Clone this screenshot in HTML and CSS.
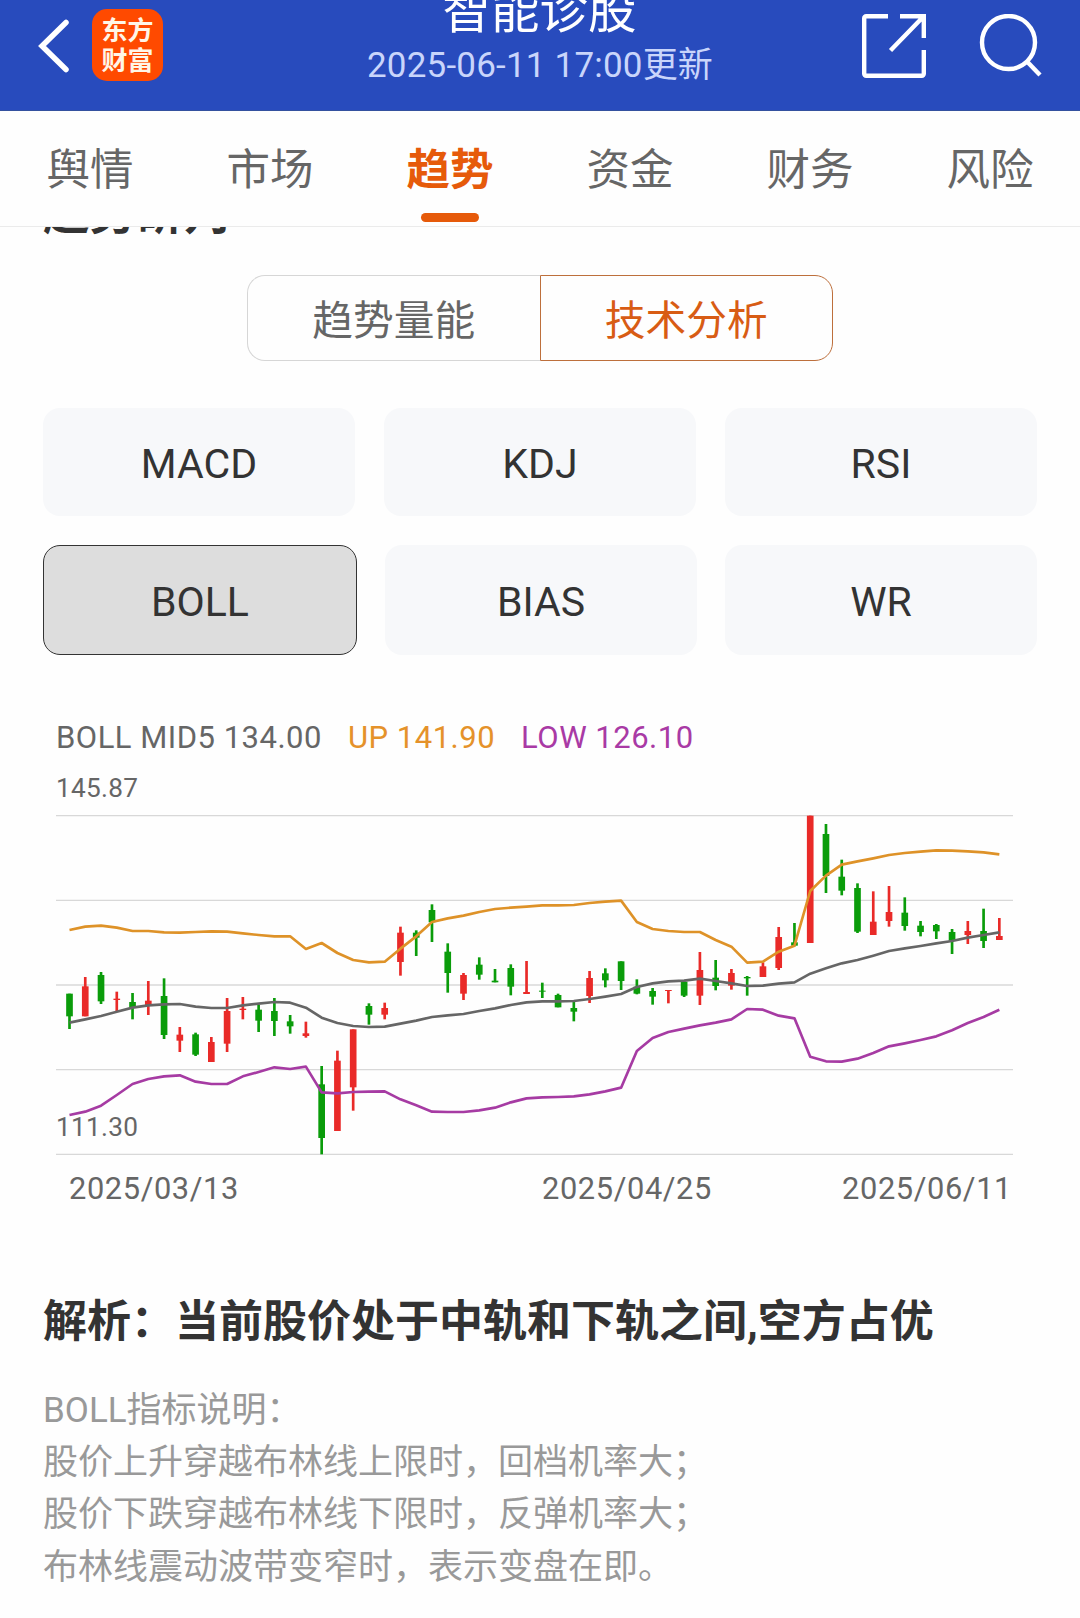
FILE: index.html
```html
<!doctype html>
<html lang="zh-CN">
  <head>
    <meta charset="utf-8" />
    <meta name="viewport" content="width=device-width" />
    <title>智能诊股</title>
    <link rel="stylesheet" href="styles.css">
  </head>

  <body>
    <header class="header">
      <div class="header-left">
        <svg class="back" width="32" height="56" viewBox="0 0 32 56">
          <path d="M28 4.5 4 28l24 23.5" />
        </svg>
        <div class="logo">东方<br />财富</div>
      </div>
      <div class="header-title">
        <h1>智能诊股</h1>
        <p>2025-06-11 17:00更新</p>
      </div>
      <div class="header-right">
        <svg class="icon" width="64" height="64" viewBox="0 0 64 64">
          <path d="M26 2.2H4.2a2 2 0 0 0-2 2v55.6a2 2 0 0 0 2 2h55.6a2 2 0 0 0 2-2V36M38 2.2h23.8V24M28.5 36.5 61 3" />
        </svg>
        <svg class="icon" width="64" height="64" viewBox="0 0 64 64">
          <circle cx="29.5" cy="28.5" r="26.5" />
          <path d="M48 47.5 61 61" />
        </svg>
      </div>
    </header>

    <nav class="tabs">
      <a class="tab">舆情</a>
      <a class="tab">市场</a>
      <a class="tab active">趋势</a>
      <a class="tab">资金</a>
      <a class="tab">财务</a>
      <a class="tab">风险</a>
    </nav>

    <main>
      <div class="section-title"><h2>趋势研判</h2></div>

      <div class="segment">
        <button class="segment-item">趋势量能</button>
        <button class="segment-item active">技术分析</button>
      </div>

      <div class="indicators">
        <div class="indicator-row">
          <button class="indicator">MACD</button>
          <button class="indicator">KDJ</button>
          <button class="indicator">RSI</button>
        </div>
        <div class="indicator-row">
          <button class="indicator active">BOLL</button>
          <button class="indicator">BIAS</button>
          <button class="indicator">WR</button>
        </div>
      </div>

      <section class="chart">
        <div class="legend">
          <span class="mid">BOLL MID5 134.00</span>
          <span class="up">UP 141.90</span>
          <span class="low">LOW 126.10</span>
        </div>
        <div class="max">145.87</div>
        <div class="plot">
          <svg id="boll" width="957" height="340" viewBox="0 0 2871 1020"></svg>
          <span class="min">111.30</span>
        </div>
        <div class="dates">
          <span>2025/03/13</span>
          <span>2025/04/25</span>
          <span>2025/06/11</span>
        </div>
      </section>

      <h3 class="analysis">解析：当前股价处于中轨和下轨之间,空方占优</h3>
      <p class="notes">
        BOLL指标说明：<br />
        股价上升穿越布林线上限时，回档机率大；<br />
        股价下跌穿越布林线下限时，反弹机率大；<br />
        布林线震动波带变窄时，表示变盘在即。
      </p>
    </main>

    <script src="chart.js"></script>
  </body>
</html>
```
FILE: styles.css
```css
* {
  box-sizing: border-box;
}
body {
  margin: 0;
  background: #fefefe;
  color: #333;
  font-family: Roboto, "Noto Sans CJK SC", sans-serif;
}
h1,
h2,
h3,
p {
  margin: 0;
}
button {
  padding: 0;
  border: 0;
  font-family: inherit;
}

.header {
  display: flex;
  height: 111px;
  overflow: hidden;
  background: #284bbd;
  border-bottom: 1px solid #34519f;
  color: #fff;
}
.header-left,
.header-right {
  display: flex;
  flex: 1;
  align-items: flex-start;
}
.header-left {
  padding: 9px 0 0 38px;
  gap: 22px;
}
.header-right {
  justify-content: flex-end;
  padding: 14px 37px 0 0;
  gap: 53px;
}
.back {
  margin-top: 9px;
  fill: none;
  stroke: #fff;
  stroke-width: 5.5;
  stroke-linecap: round;
}
.icon {
  fill: none;
  stroke: #fff;
  stroke-width: 4.4;
}
.logo {
  width: 71px;
  height: 72px;
  padding-top: 7px;
  border-radius: 15px;
  background: #ff4a00;
  color: #fff6e8;
  font-size: 26px;
  font-weight: 700;
  line-height: 30px;
  text-align: center;
}
.header-title {
  text-align: center;
}
.header-title h1 {
  margin: -15px 2px 0 0;
  font-size: 48.5px;
  font-weight: 400;
  line-height: 54px;
}
.header-title p {
  margin: 3px 1px 0 0;
  color: #c9d5fb;
  font-size: 35px;
  letter-spacing: 0.2px;
  line-height: 48px;
}

.tabs {
  display: flex;
  height: 116px;
  border-bottom: 1px solid #ebebeb;
}
.tab {
  display: flex;
  flex: 1;
  flex-direction: column;
  align-items: center;
  padding-top: 31px;
  color: #666;
  font-size: 43.5px;
  line-height: 58px;
}
.tab.active {
  color: #e65a0a;
  font-weight: 700;
}
.tab.active::after {
  content: "";
  width: 58px;
  height: 9px;
  margin-top: 13px;
  border-radius: 5px;
  background: #e65a0a;
}

main {
  padding: 0 43px;
}
/* only the bottom edge shows, the rest is scrolled under the tabs */
.section-title {
  display: flex;
  align-items: flex-end;
  height: 12px;
  overflow: hidden;
}
.section-title h2 {
  font-size: 46.5px;
  line-height: 52px;
}

.segment {
  display: flex;
  width: 586px;
  height: 86px;
  margin: 36px auto 0 204px;
}
.segment-item {
  flex: 1;
  padding-bottom: 1px;
  border: 1px solid #d6d6d6;
  border-right: 0;
  border-radius: 18px 0 0 18px;
  background: none;
  color: #666;
  font-size: 40.7px;
}
.segment-item.active {
  border: 1px solid #bd6f3c;
  border-radius: 0 18px 18px 0;
  color: #d85c14;
}

.indicators {
  display: flex;
  flex-direction: column;
  gap: 29px;
  margin-top: 47px;
}
.indicator-row {
  display: flex;
  justify-content: space-between;
}
.indicator {
  width: 312px;
  height: 108px;
  padding-top: 4px;
  border-radius: 17px;
  background: #f7f8fa;
  color: #333;
  font-size: 41px;
}
.indicator-row:last-child .indicator {
  height: 110px;
}
.indicator.active {
  width: 314px;
  border: 1px solid #333;
  background: #ddd;
}

.chart {
  margin-top: 63px;
  padding: 0 24px 0 13px;
  color: #666;
}
.legend {
  display: flex;
  gap: 26px;
  font-size: 31px;
  letter-spacing: 0.5px;
  line-height: 40px;
}
.up {
  color: #e5922a;
}
.low {
  color: #a93aa5;
}
.max,
.min {
  font-size: 26.2px;
  letter-spacing: 0.3px;
  line-height: 30px;
}
.max {
  margin-top: 15px;
}
.plot {
  position: relative;
  height: 340px;
  margin-top: 12px;
}
.plot svg {
  display: block;
}
.min {
  position: absolute;
  left: 0;
  bottom: 13px;
}
.dates {
  display: flex;
  justify-content: space-between;
  padding: 14px 1px 0 13px;
  font-size: 30.8px;
  letter-spacing: 0.6px;
  line-height: 40px;
}
.dates span:nth-child(2) {
  margin-left: 173px;
}

.grid {
  stroke: #d8d8d8;
  stroke-width: 4;
}
.line {
  fill: none;
  stroke-width: 8;
  stroke-linejoin: round;
}
.line-mid {
  stroke: #666;
}
.line-up {
  stroke: #de9228;
}
.line-low {
  stroke: #a63ba3;
}
.rise {
  fill: #e92a28;
}
.fall {
  fill: #0a9c0a;
}

.analysis {
  margin-top: 80px;
  font-size: 44px;
  line-height: 66px;
}
.notes {
  margin-top: 30px;
  color: #999;
  font-size: 35px;
  line-height: 52.2px;
}
```
FILE: chart.js
```js
// [direction, high, body top, body bottom, low], measured down from the plot top
const candles = [
  ["fall", 536, 536, 604, 642],
  ["rise", 486, 514, 604, 604],
  ["fall", 471, 480, 559, 567],
  ["rise", 530, 551, 555, 589],
  ["fall", 534, 561, 577, 613],
  ["rise", 498, 557, 573, 600],
  ["fall", 490, 543, 660, 672],
  ["rise", 636, 659, 677, 711],
  ["fall", 653, 658, 719, 723],
  ["rise", 666, 681, 741, 741],
  ["rise", 549, 588, 686, 711],
  ["rise", 546, 581, 585, 613],
  ["fall", 569, 584, 617, 651],
  ["fall", 549, 588, 618, 663],
  ["fall", 600, 619, 634, 656],
  ["rise", 620, 655, 663, 668],
  ["fall", 753, 808, 969, 1018],
  ["rise", 707, 737, 948, 948],
  ["rise", 643, 643, 817, 887],
  ["fall", 565, 573, 599, 629],
  ["rise", 563, 579, 599, 613],
  ["rise", 335, 353, 441, 482],
  ["fall", 346, 353, 368, 423],
  ["fall", 268, 285, 322, 381],
  ["fall", 385, 410, 474, 533],
  ["rise", 474, 480, 536, 555],
  ["fall", 427, 449, 479, 494],
  ["fall", 462, 497, 502, 502],
  ["fall", 448, 459, 515, 541],
  ["rise", 438, 531, 537, 537],
  ["fall", 503, 527, 530, 549],
  ["fall", 536, 540, 577, 577],
  ["fall", 561, 579, 590, 619],
  ["rise", 468, 489, 543, 564],
  ["fall", 460, 475, 496, 517],
  ["fall", 439, 439, 498, 525],
  ["fall", 493, 515, 536, 538],
  ["fall", 519, 528, 545, 569],
  ["rise", 525, 525, 528, 565],
  ["fall", 498, 500, 542, 546],
  ["rise", 411, 465, 542, 570],
  ["fall", 435, 488, 513, 526],
  ["rise", 462, 474, 512, 524],
  ["fall", 483, 486, 490, 542],
  ["rise", 442, 454, 486, 486],
  ["rise", 336, 366, 459, 465],
  ["fall", 324, 382, 392, 394],
  ["rise", 2, 2, 384, 384],
  ["fall", 27, 57, 183, 234],
  ["fall", 134, 185, 227, 241],
  ["fall", 205, 219, 350, 354],
  ["rise", 229, 320, 360, 360],
  ["rise", 213, 291, 318, 335],
  ["fall", 247, 293, 333, 347],
  ["fall", 318, 332, 351, 364],
  ["fall", 327, 330, 349, 372],
  ["fall", 342, 351, 377, 417],
  ["rise", 318, 348, 360, 387],
  ["fall", 281, 348, 378, 399],
  ["rise", 309, 363, 375, 375],
];

const lines = {
  mid: [
    623, 613, 603, 590, 578, 571, 568, 567, 575, 579, 579, 571, 566, 561, 563,
    578, 608, 624, 633, 636, 635, 626, 617, 606, 601, 597, 588, 580, 570, 562,
    559, 559, 558, 552, 545, 537, 516, 505, 499, 497, 491, 498, 505, 513, 512,
    506, 502, 476, 460, 445, 435, 422, 408, 400, 393, 385, 378, 368, 360, 352,
  ],
  up: [
    345, 335, 332, 338, 348, 348, 352, 353, 351, 349, 350, 355, 360, 364, 364,
    402, 384, 414, 435, 442, 440, 401, 364, 321, 310, 302, 291, 282, 278, 275,
    271, 271, 270, 264, 260, 257, 321, 342, 348, 351, 351, 375, 395, 443, 440,
    410, 392, 228, 182, 149, 139, 130, 120, 114, 110, 106, 107, 109, 112, 118,
  ],
  low: [
    900, 890, 872, 840, 807, 792, 784, 781, 800, 807, 807, 784, 771, 757, 762,
    755, 832, 835, 831, 830, 829, 853, 871, 890, 891, 891, 886, 878, 862, 850,
    847, 846, 844, 838, 829, 818, 708, 669, 651, 641, 631, 623, 613, 582, 584,
    602, 610, 725, 739, 740, 731, 714, 694, 685, 675, 664, 646, 624, 606, 584,
  ],
};

const svg = document.getElementById("boll");
const x = (i) => 40.5 + i * 47.28;

function add(name, attributes) {
  const node = document.createElementNS("http://www.w3.org/2000/svg", name);
  for (const key in attributes) {
    node.setAttribute(key, attributes[key]);
  }
  svg.appendChild(node);
}

for (const y of [2, 256, 510, 764, 1018]) {
  add("line", { class: "grid", x1: 0, x2: 2871, y1: y, y2: y });
}

candles.forEach(([type, high, top, bottom, low], i) => {
  add("rect", { class: type, x: x(i) - 4, y: high, width: 8, height: low - high });
  add("rect", { class: type, x: x(i) - 10, y: top, width: 20, height: bottom - top });
});

for (const name in lines) {
  const points = lines[name].map((y, i) => `${x(i)},${y}`).join(" ");
  add("polyline", { class: `line line-${name}`, points });
}
```
